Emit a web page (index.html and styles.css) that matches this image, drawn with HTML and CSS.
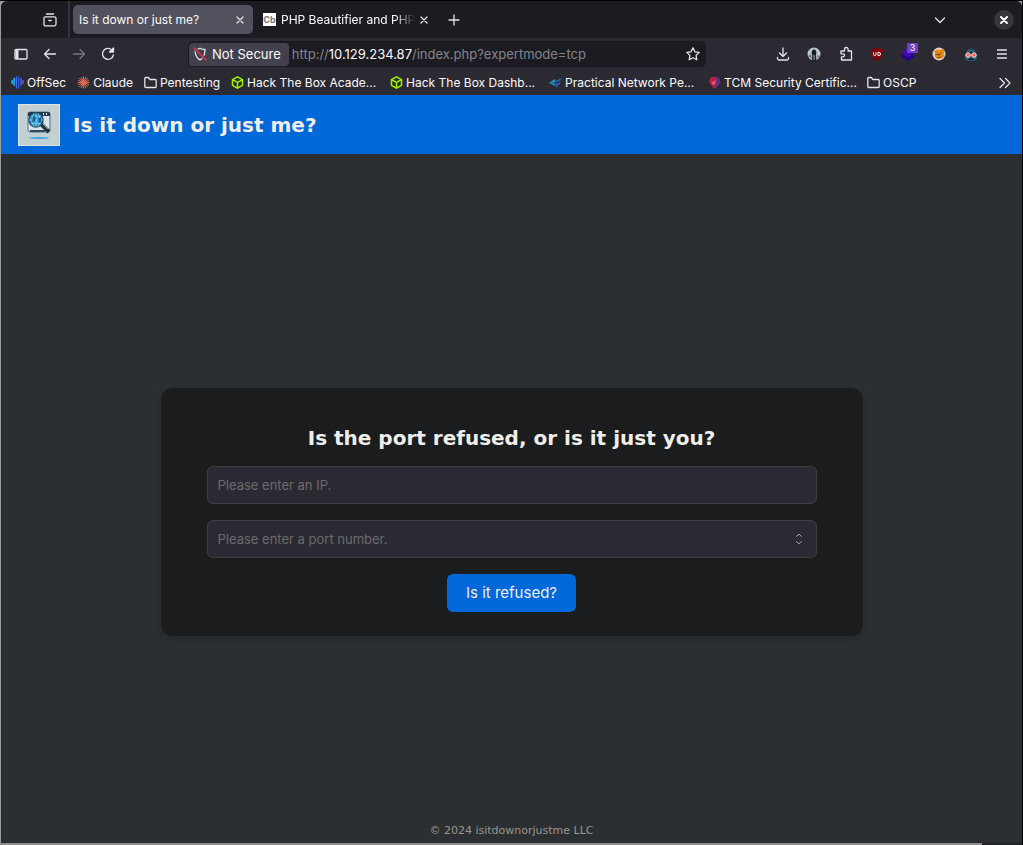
FILE: index.html
```html
<!DOCTYPE html>
<html lang="en">
<head>
  <meta charset="UTF-8">
  <meta name="viewport" content="width=device-width, initial-scale=1.0">
  <title>Is it down or just me?</title>
  <link rel="stylesheet" href="styles.css">
</head>
<body>
  <div class="window">

    <!-- Tab strip -->
    <div class="tabs">
      <button class="icon-btn view-btn" aria-label="View recent browsing">
        <svg width="16" height="16" viewBox="0 0 16 16" class="line"><path d="M4.500 2h7"/><path d="M3.500 4.800h9q1.500 0 1.500 1.500v6q0 1.500-1.500 1.500h-9Q2 13.800 2 12.300v-6q0-1.500 1.500-1.500z"/><path d="M6.800 8.500h2.400"/></svg>
      </button>
      <div class="tab active">
        <span class="tab-label">Is it down or just me?</span>
        <button class="tab-close" aria-label="Close tab"><svg width="8" height="8" viewBox="0 0 8 8" class="line"><path d="M1 1l6 6M7 1l-6 6"/></svg></button>
      </div>
      <div class="tab">
        <span class="favicon">Cb</span>
        <span class="tab-label fade">PHP Beautifier and PHP</span>
        <button class="tab-close" aria-label="Close tab"><svg width="8" height="8" viewBox="0 0 8 8" class="line"><path d="M1 1l6 6M7 1l-6 6"/></svg></button>
      </div>
      <button class="icon-btn new-tab" aria-label="New tab"><svg width="12" height="12" viewBox="0 0 12 12" class="line"><path d="M6 1v10M1 6h10"/></svg></button>
      <button class="icon-btn list-btn" aria-label="List all tabs"><svg width="12" height="12" viewBox="0 0 12 12" class="line"><path d="M1.500 4L6 8.500 10.500 4"/></svg></button>
      <button class="close-window" aria-label="Close window"><svg width="8" height="8" viewBox="0 0 8 8" class="line bold"><path d="M1 1l6 6M7 1l-6 6"/></svg></button>
    </div>

    <!-- Navigation bar -->
    <div class="nav">
      <div class="nav-left">
        <button class="icon-btn" aria-label="Sidebar"><svg width="16" height="16" viewBox="0 0 16 16" class="line"><rect x="2" y="3.500" width="12" height="9.500" rx="1"/><path d="M4 5v6.500" class="wide"/></svg></button>
        <button class="icon-btn" aria-label="Back"><svg width="16" height="16" viewBox="0 0 16 16" class="line"><path d="M13.500 8H3M7 3.500L2.500 8 7 12.500"/></svg></button>
        <button class="icon-btn dim" aria-label="Forward"><svg width="16" height="16" viewBox="0 0 16 16" class="line"><path d="M2.500 8H13M9 3.500L13.500 8 9 12.500"/></svg></button>
        <button class="icon-btn" aria-label="Reload"><svg width="16" height="16" viewBox="0 0 16 16" class="line"><path d="M13.400 9a5.500 5.500 0 1 1-1.500-5l1 1"/><path d="M13.500 2v4h-4z" fill="#e4e4e8"/></svg></button>
      </div>
      <div class="urlbar">
        <button class="security">
          <svg width="14" height="14" viewBox="0 0 14 14" class="line"><path d="M7 1.200c1.600 1 3.300 1.300 5 1.300 0 5-1 8.300-5 10.300-4-2-5-5.300-5-10.300 1.700 0 3.400-.3 5-1.300z"/><path d="M1 1l12 12" stroke="#42414d" stroke-width="3"/><path d="M1 1l12 12" stroke="#ff2655"/></svg>
          Not Secure
        </button>
        <span class="url">http://<b>10.129.234.87</b>/index.php?expertmode=tcp</span>
        <button class="icon-btn" aria-label="Bookmark this page"><svg width="16" height="16" viewBox="0 0 16 16" class="line"><path d="M8 1.800l1.900 4 4.300.6-3.100 3 .7 4.400L8 11.700l-3.800 2.100.7-4.400-3.100-3 4.300-.6z"/></svg></button>
      </div>
      <div class="nav-right">
        <button class="icon-btn" aria-label="Downloads"><svg width="16" height="16" viewBox="0 0 16 16" class="line"><path d="M8 2v8M4.500 7L8 10.500 11.500 7M2.500 11.500v1c0 1 .5 1.500 1.500 1.500h8c1 0 1.500-.5 1.500-1.500v-1"/></svg></button>
        <button class="icon-btn" aria-label="Account"><svg width="14" height="14" viewBox="0 0 14 14"><circle cx="7" cy="7" r="6.500" fill="#bcc8ce"/><path d="M1 9l3-2 1 5zM10 8l3 1-2 3z" fill="#697d86"/><path d="M5 14l.3-6C4 5 5 2.500 7 2.500S10 5 9 8l.5 6z" fill="#17191c"/><path d="M6.500 8h1.300v5H6.500z" fill="#8b969b"/></svg></button>
        <button class="icon-btn" aria-label="Extensions"><svg width="16" height="16" viewBox="0 0 16 16" class="line"><path d="M3 5h3.500V3.300a1.800 1.800 0 0 1 3.600 0V5H13.500v9H3.500v-3.200H5a1.500 1.500 0 0 0 0-3H3z"/></svg></button>
        <button class="icon-btn" aria-label="uBlock Origin"><svg width="14" height="14" viewBox="0 0 14 14"><path d="M7 .5c2 1.200 4 1.500 6 1.500 0 6-1 9-6 11.700C2 11 1 8 1 2c2 0 4-.3 6-1.500z" fill="#800008"/><path d="M3.500 5.300v2.200q0 1.200 1.200 1.200T6 7.500V5.300M8 5.300v3.400h.8q1.700 0 1.700-1.700T8.800 5.300z" fill="none" stroke="#fff"/></svg></button>
        <button class="icon-btn badged" aria-label="Wappalyzer"><svg width="14" height="14" viewBox="0 0 14 14"><path d="M7 4.500l7 4.500-7 5-7-5z" fill="#24009a"/><path d="M7 1l7 4.500-7 5-7-5z" fill="#4608ad"/></svg><span class="badge">3</span></button>
        <button class="icon-btn" aria-label="FoxyProxy"><svg width="14" height="14" viewBox="0 0 14 14"><circle cx="7" cy="7" r="6.500" fill="#ded5c7"/><path d="M2 4l3-1.500L8 3l3-1.500 1.500 3-.8 2 .8 3-3 2-4 .5L3 10l.5-3z" fill="#e58a14"/><path d="M3 8l3-1 1 1.500 2-3M5 11l4-1" fill="none" stroke="#754011"/></svg></button>
        <button class="icon-btn" aria-label="Spy extension"><svg width="14" height="14" viewBox="0 0 14 14"><path d="M2 7c0-7 10-7 10 0l1 5-3 2H4l-3-2z" fill="#255b72"/><path d="M1 6h12" stroke="#101d25" stroke-width="2"/><circle cx="4" cy="8" r="2.300" fill="#f06b56" stroke="#e8e1dc"/><circle cx="10" cy="8" r="2.300" fill="#f06b56" stroke="#e8e1dc"/><path d="M4 13c0-2 6-2 6 0z" fill="#10191f"/></svg></button>
        <button class="icon-btn" aria-label="Menu"><svg width="16" height="16" viewBox="0 0 16 16" class="line"><path d="M3.500 4h9M3.500 8h9M3.500 12h9"/></svg></button>
      </div>
    </div>

    <!-- Bookmarks -->
    <nav class="bookmarks">
      <a href="#"><svg width="13" height="13" viewBox="0 0 13 13"><path d="M3.200 1.800v8M1.200 4v4" stroke="#27a5df" stroke-width="1.800"/><path d="M5.500.5v12" stroke="#2f78e5" stroke-width="1.300"/><path d="M7.700.5v12" stroke="#3f58e3" stroke-width="1.300"/><path d="M10 1.800v8M12 4v4" stroke="#4a52c4" stroke-width="1.800"/></svg>OffSec</a>
      <a href="#"><svg width="13" height="13" viewBox="0 0 13 13"><path d="M6.500.5v12M.5 6.500h12M2.200 2.200l8.600 8.600M10.800 2.200l-8.600 8.600M4.200 1l4.600 11M8.800 1L4.200 12M1 4.200l11 4.600M1 8.800l11-4.600" stroke="#e0694c"/></svg>Claude</a>
      <a href="#"><svg width="13" height="13" viewBox="0 0 13 13" class="line"><path d="M.8 10.500v-8q0-1 1-1h2.500l1.700 2h5.200q1 0 1 1v6q0 1-1 1H1.800q-1 0-1-1z"/></svg>Pentesting</a>
      <a href="#" class="long"><svg width="13" height="13" viewBox="0 0 13 13"><path d="M6.500.8l5 2.800v5.800l-5 2.800-5-2.800V3.600zM1.500 3.600l5 2.900 5-2.900M6.500 6.500v5.700" fill="none" stroke="#9fef00" stroke-width="1.500"/></svg>Hack The Box Acade...</a>
      <a href="#" class="long"><svg width="13" height="13" viewBox="0 0 13 13"><path d="M6.500.8l5 2.800v5.800l-5 2.800-5-2.800V3.600zM1.500 3.600l5 2.900 5-2.900M6.500 6.500v5.700" fill="none" stroke="#9fef00" stroke-width="1.500"/></svg>Hack The Box Dashb...</a>
      <a href="#" class="long"><svg width="13" height="13" viewBox="0 0 13 13"><path d="M0 7l6-4v7z" fill="#23a3c6"/><path d="M5 5l8-3-2 3-6 2zM5 8l7-2-2 3-5 1zM5 10.500l5-1-2 2z" fill="#285da5"/><path d="M2 7h4" stroke="#174d75"/></svg>Practical Network Pe...</a>
      <a href="#" class="long"><svg width="13" height="13" viewBox="0 0 13 13"><path d="M2 2l4-1.500L11 2l.8 5L9 11l-3 1.500L3 9 1 6z" fill="#b81f48"/><path d="M8 1l3 1 .8 5L9 11l-3 1.500L8 8z" fill="#623079"/><path d="M3 5l2 1 3-2-1 4-2 1z" fill="#ec5675"/></svg>TCM Security Certific...</a>
      <a href="#"><svg width="13" height="13" viewBox="0 0 13 13" class="line"><path d="M.8 10.500v-8q0-1 1-1h2.500l1.700 2h5.200q1 0 1 1v6q0 1-1 1H1.800q-1 0-1-1z"/></svg>OSCP</a>
      <button class="icon-btn more" aria-label="More bookmarks"><svg width="14" height="14" viewBox="0 0 14 14" class="line"><path d="M2 2.500L6.500 7 2 11.500M7.500 2.500L12 7l-4.500 4.500"/></svg></button>
    </nav>

    <!-- Page -->
    <header>
      <svg class="logo" width="42" height="42" viewBox="0 0 42 42">
        <rect x=".5" y=".5" width="41" height="41" fill="#c3d0d2" stroke="#dce3e2"/>
        <rect x="10" y="8" width="22" height="20" rx="2" fill="#d9e4e6" stroke="#50728a"/>
        <path d="M10 12V9.500Q10 8 12 8h18q2 0 2 1.500V12z" fill="#20394d"/>
        <path d="M25 10h1M28 10h1" stroke="#e8f1f2" stroke-width="2"/>
        <path d="M12 27h15" stroke="#304b60" stroke-width="2"/>
        <path d="M23 20l8 8" stroke="#263440" stroke-width="4"/>
        <path d="M24 19l6 6" stroke="#929ea3"/>
        <circle cx="18" cy="16" r="7" fill="#2f9cd0" stroke="#1d4c6d" stroke-width="1.500"/>
        <path d="M11 16h14M18 9v14M13 12q5 2 10 0M13 20q5-2 10 0M16 9q-4 7 0 14M20 9q4 7 0 14" fill="none" stroke="#a5dced" stroke-width=".6"/>
        <path d="M15 12l3 1-1 4-3 1zM20 15l3-2v5l-2 1z" fill="#165f92"/>
        <ellipse cx="21" cy="34" rx="10" ry="1" fill="#43a9e5"/>
      </svg>
      <h1>Is it down or just me?</h1>
    </header>
    <main>
      <form class="card">
        <h2>Is the port refused, or is it just you?</h2>
        <input type="text" placeholder="Please enter an IP." aria-label="IP address">
        <div class="number-field">
          <input type="number" placeholder="Please enter a port number." aria-label="Port number">
          <svg class="spinner" width="8" height="12" viewBox="0 0 8 12"><path d="M1.200 3.700L4 1.200l2.800 2.500M1.200 8.300L4 10.800l2.800-2.500"/></svg>
        </div>
        <button type="button" class="submit">Is it refused?</button>
      </form>
    </main>
    <footer>© 2024 isitdownorjustme LLC</footer>
  </div>
</body>
</html>
```
FILE: styles.css
```css
* {
  box-sizing: border-box;
}
body {
  margin: 0;
  padding: 1px 1px 2px;
  min-height: 100vh;
  display: flex;
  background:
    linear-gradient(#000, #000) top / 100% 1px no-repeat,
    linear-gradient(#000, #000) right / 1px 100% no-repeat,
    linear-gradient(90deg, #8f8c8a 96%, #202225 96%) bottom / 100% 2px no-repeat,
    #9b9b99;
  font-family: Inter, "Noto Sans", sans-serif;
  font-size: 13px;
  color: #fbfbfe;
}
.window {
  flex: 1;
  min-width: 0;
  display: flex;
  flex-direction: column;
  background: #2b2f31;
  border-radius: 6px 6px 0 0;
  overflow: hidden;
}
button {
  font: inherit;
  color: inherit;
  border: none;
  padding: 0;
  background: none;
}
svg {
  display: block;
  flex: none;
}
.line {
  fill: none;
  stroke: #e4e4e8;
  stroke-width: 1.3;
  stroke-linecap: round;
  stroke-linejoin: round;
}
.bold {
  stroke: #fbfbfe;
  stroke-width: 2;
}
.wide {
  stroke-width: 3;
}
.icon-btn {
  width: 16px;
  height: 24px;
  display: flex;
  align-items: center;
  justify-content: center;
  flex: none;
}
.dim {
  opacity: 0.4;
}

/* Tab strip */
.tabs {
  height: 37px;
  display: flex;
  align-items: center;
  background: #1c1b22;
}
.view-btn {
  width: 69px;
  height: 37px;
  padding-left: 31px;
  border-right: 2px solid #34333c;
}
.tab {
  width: 180px;
  height: 29px;
  padding: 0 9px 0 6px;
  display: flex;
  align-items: center;
  gap: 5px;
}
.tab.active {
  margin: 0 4px 0 3px;
  background: #52515e;
  border-radius: 5px;
}
.tab-label {
  flex: 1;
  font-size: 12px;
  white-space: nowrap;
  overflow: hidden;
}
.fade {
  mask-image: linear-gradient(90deg, #000 85%, transparent);
}
.favicon {
  width: 13px;
  height: 13px;
  background: #fff;
  color: #777;
  font-size: 9px;
  line-height: 13px;
  font-weight: bold;
  text-align: center;
}
.new-tab {
  margin-left: 9px;
}
.list-btn {
  margin-left: auto;
}
.close-window {
  width: 20px;
  height: 20px;
  margin: 0 8px 0 46px;
  border-radius: 50%;
  background: #36353b;
  display: flex;
  align-items: center;
  justify-content: center;
}

/* Navigation bar */
.nav {
  height: 32px;
  display: flex;
  align-items: center;
  padding: 0 12px;
  background: #2b2a33;
}
.nav-left {
  width: 175px;
  display: flex;
  gap: 13px;
}
.urlbar {
  flex: 0 1 518px;
  height: 26px;
  padding: 0 5px 0 1px;
  display: flex;
  align-items: center;
  background: #1c1b22;
  border-radius: 5px;
}
.security {
  height: 23px;
  padding: 0 8px 0 4px;
  display: flex;
  align-items: center;
  gap: 5px;
  background: #42414d;
  border-radius: 4px;
  white-space: nowrap;
}
.url {
  flex: 1;
  margin-left: 3px;
  color: #85848c;
  white-space: nowrap;
}
.url b {
  font-weight: normal;
  color: #fbfbfe;
}
.nav-right {
  flex: 1;
  display: flex;
  justify-content: space-between;
  padding-left: 69px;
}
.badged {
  position: relative;
}
.badge {
  position: absolute;
  top: 1px;
  right: -2px;
  width: 11px;
  height: 10px;
  background: #7040c0;
  font-size: 9px;
  line-height: 10px;
}

/* Bookmarks */
.bookmarks {
  height: 25px;
  padding: 0 9px 0 10px;
  display: flex;
  align-items: center;
  gap: 11px;
  background: #2b2a33;
  font-size: 12px;
}
.bookmarks a {
  display: flex;
  align-items: center;
  gap: 3px;
  color: inherit;
  text-decoration: none;
  white-space: nowrap;
}
.bookmarks .long {
  width: 148px;
}
.more {
  margin-left: auto;
}

/* Page */
header {
  height: 59px;
  padding: 0 17px;
  display: flex;
  align-items: center;
  gap: 13px;
  background: #0068d9;
}
h1, h2 {
  margin: 0;
  font-family: "DejaVu Sans", sans-serif;
  font-size: 20px;
  line-height: 24px;
  color: #f0eee9;
}
main {
  flex: 1;
  padding: 51px 24px 0;
  display: flex;
  align-items: center;
  justify-content: center;
}
.card {
  width: 702px;
  padding: 38px 46px 24px;
  display: flex;
  flex-direction: column;
  align-items: center;
  gap: 16px;
  background: #1b1c1d;
  border-radius: 12px;
  box-shadow: 0 3px 10px rgba(0, 0, 0, 0.15);
}
.card input {
  width: 100%;
  height: 38px;
  padding: 0 10px;
  background: #2b2a33;
  border: 1px solid #3c4043;
  border-radius: 6px;
  font: inherit;
  color: #f0eee9;
  appearance: textfield;
}
.card input::placeholder {
  color: #6d6b6a;
}
.number-field {
  position: relative;
  width: 100%;
}
.spinner {
  position: absolute;
  right: 14px;
  top: 13px;
  fill: none;
  stroke: #a5a4aa;
}
.submit {
  height: 38px;
  padding: 0 19px;
  background: #0068d9;
  border-radius: 6px;
  font-size: 15px;
  line-height: 18px;
  color: #f0eee9;
}
footer {
  height: 24px;
  font-family: "DejaVu Sans", sans-serif;
  font-size: 11px;
  line-height: 24px;
  text-align: center;
  color: #9c958c;
}
```
